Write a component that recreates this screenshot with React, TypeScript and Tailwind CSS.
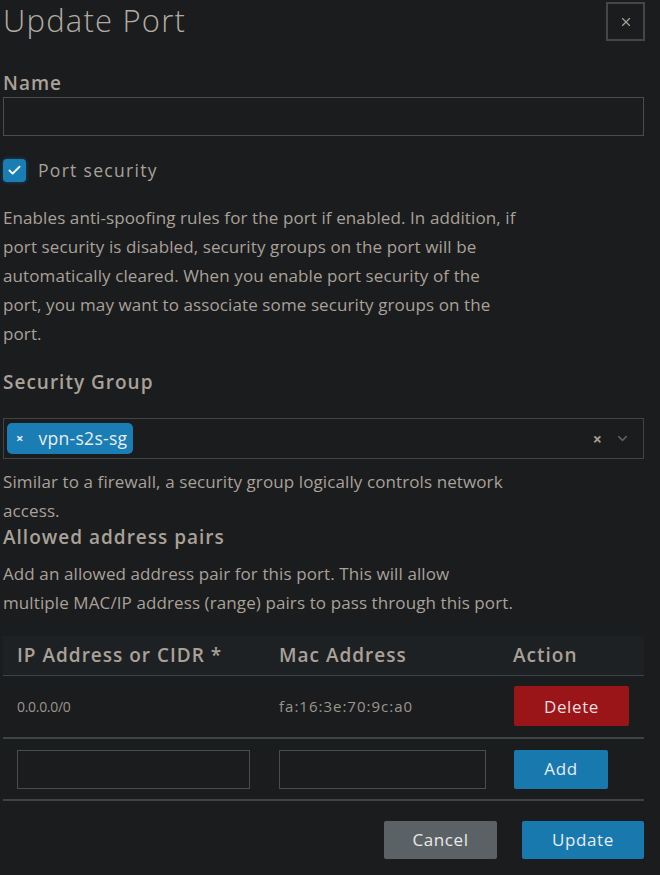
import { Check, ChevronDown, X } from "lucide-react";

const font = { fontFamily: '"Open Sans", "Noto Sans", sans-serif' };

const AddressPairs = [{ ip: "0.0.0.0/0", mac: "fa:16:3e:70:9c:a0" }];

const labelCls = "block text-[19px] font-semibold leading-[24px] tracking-[1px]";
const bodyCls = "text-[17px] leading-[29px] tracking-[0.1px]";

export default function App() {
  return (
    <div
      className="w-[660px] h-[875px] bg-[#1a1c1e] text-[#aaa198] overflow-hidden pl-[3px] pr-[16px]"
      style={font}
    >
      {/* header */}
      <div className="flex items-start justify-between pt-[1px]">
        <h1 className="text-[31px] font-light leading-[38px] tracking-[1.2px] text-[#b3aba2]">Update Port</h1>
        <button className="-mr-[1px] mt-[1px] w-[39px] h-[39px] border-2 border-[#43474a] flex items-center justify-center text-[#aaa198]">
          <X size={14} strokeWidth={2} />
        </button>
      </div>

      {/* name */}
      <label className={`${labelCls} mt-[30px]`}>Name</label>
      <div className="mt-[2px] h-[39px] border border-[#4a4d50]" />

      {/* port security */}
      <div className="flex items-center gap-[12px] mt-[22px]">
        <span className="w-[23px] h-[23px] rounded-[4px] bg-[#1a7db4] flex items-center justify-center text-white shadow-[0_0_4px_rgba(26,125,180,0.5)]">
          <Check size={15} strokeWidth={3} />
        </span>
        <span className="text-[17.5px] leading-[24px] tracking-[1.3px]">Port security</span>
      </div>

      <p className={`${bodyCls} mt-[21px]`}>
        Enables anti-spoofing rules for the port if enabled. In addition, if
        <br />
        port security is disabled, security groups on the port will be
        <br />
        automatically cleared. When you enable port security of the
        <br />
        port, you may want to associate some security groups on the
        <br />
        port.
      </p>

      {/* security group */}
      <label className={`${labelCls} mt-[22px]`}>Security Group</label>
      <div className="mt-[24px] h-[41px] border border-[#3f4446] flex items-center px-[3px]">
        <span className="flex items-center h-[31px] rounded-[5px] bg-[#1a7db4] pl-[9px] pr-[6px] text-[#e6eef3]">
          <span className="text-[13px] font-bold mr-[15px]">×</span>
          <span className="text-[17.5px] tracking-[0.3px]">vpn-s2s-sg</span>
        </span>
        <span className="ml-auto text-[16px] font-bold text-[#a59d94] mr-[13px]">×</span>
        <ChevronDown size={15} strokeWidth={2.5} className="text-[#5b5f62] mr-[10px]" />
      </div>
      <p className={`${bodyCls} mt-[8px] leading-[28px]`}>
        Similar to a firewall, a security group logically controls network
        <br />
        access.
      </p>

      <h2 className={labelCls}>Allowed address pairs</h2>
      <p className={`${bodyCls} mt-[10px] leading-[28px]`}>
        Add an allowed address pair for this port. This will allow
        <br />
        multiple MAC/IP address (range) pairs to pass through this port.
      </p>

      {/* table */}
      <table className="mt-[19px] w-full border-collapse">
        <thead>
          <tr className="bg-[#1e2123] border-b border-[#3e4345]">
            <th className={`${labelCls} table-cell w-[262px] h-[39px] pl-[14px] text-left`}>IP Address or CIDR *</th>
            <th className={`${labelCls} table-cell w-[234px] pl-[14px] text-left`}>Mac Address</th>
            <th className={`${labelCls} table-cell pl-[14px] text-left`}>Action</th>
          </tr>
        </thead>
        <tbody>
          {AddressPairs.map((p) => (
            <tr key={p.ip} className="border-b-2 border-[#3e4345]">
              <td className="h-[63px] pl-[14px] text-[14px] tracking-[-0.3px] text-[#9d958c]">{p.ip}</td>
              <td className="pl-[14px] text-[15px] tracking-[1px] text-[#9d958c]">{p.mac}</td>
              <td className="pl-[15px]">
                <button className="w-[115px] h-[40px] rounded-[2px] bg-[#9a1518] text-[#ecdede] text-[17px] font-medium tracking-[0.6px]">
                  Delete
                </button>
              </td>
            </tr>
          ))}
          <tr className="border-b-2 border-[#3e4345]">
            <td className="h-[62px] pl-[14px]">
              <div className="w-[233px] h-[39px] border border-[#4a4d50]" />
            </td>
            <td className="pl-[14px]">
              <div className="w-[207px] h-[39px] border border-[#4a4d50]" />
            </td>
            <td className="pl-[15px]">
              <button className="w-[94px] h-[39px] rounded-[2px] bg-[#1879af] text-[#e6eef3] text-[17px] font-medium tracking-[0.6px]">
                Add
              </button>
            </td>
          </tr>
        </tbody>
      </table>

      {/* footer */}
      <div className="flex justify-end gap-[25px] mt-[20px]">
        <button className="w-[113px] h-[38px] rounded-[2px] bg-[#5b6265] text-[#e9e9e9] text-[17px] font-medium tracking-[0.6px]">
          Cancel
        </button>
        <button className="w-[122px] h-[38px] rounded-[2px] bg-[#1879af] text-[#e6eef3] text-[17px] font-medium tracking-[0.6px]">
          Update
        </button>
      </div>
    </div>
  );
}
